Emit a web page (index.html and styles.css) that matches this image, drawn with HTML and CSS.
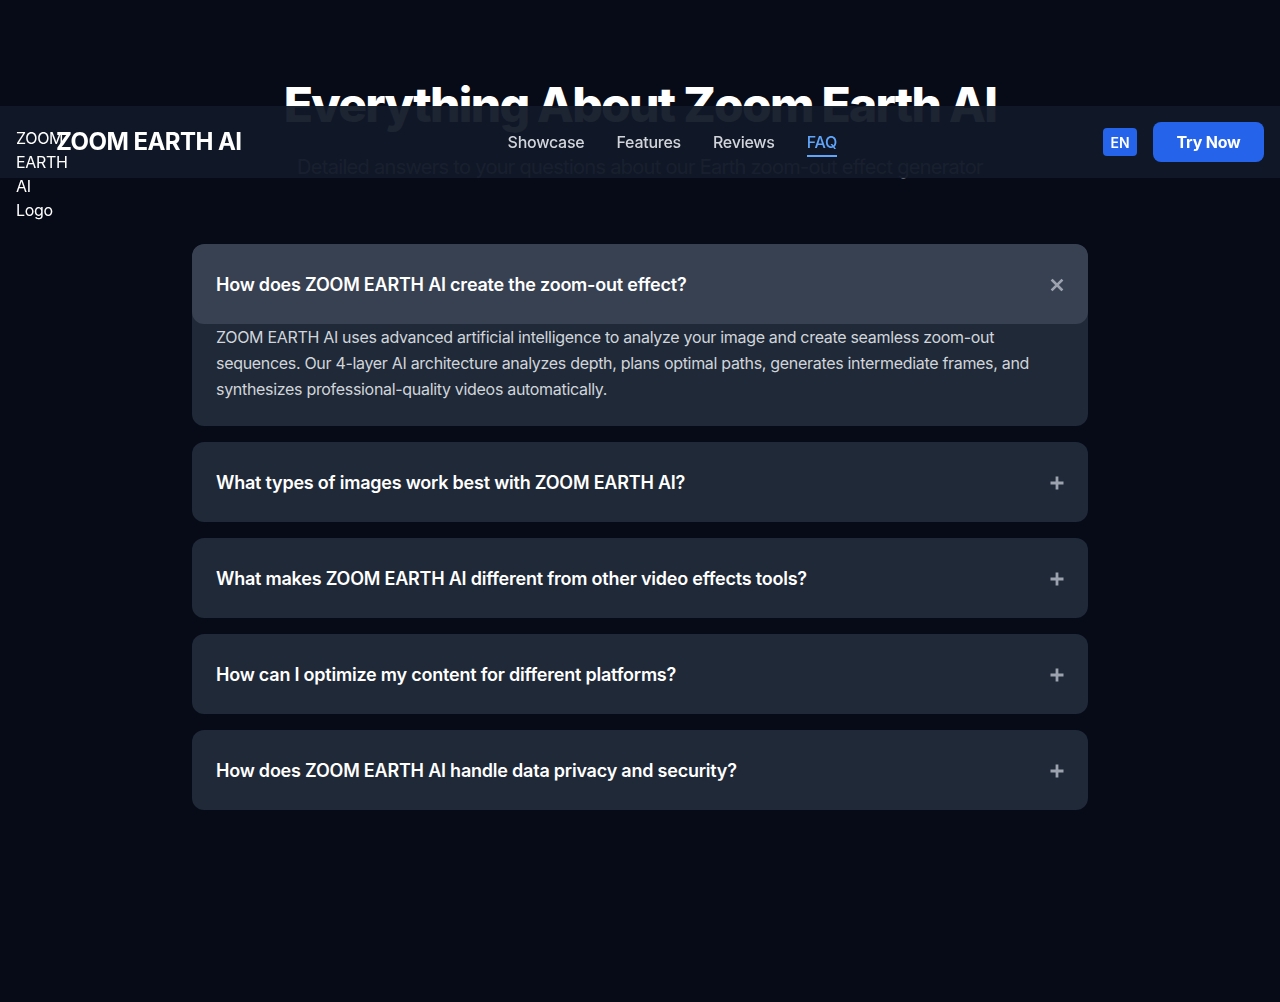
FILE: index.html
```html
<!DOCTYPE html>
<html lang="en">
<head>
<meta charset="utf-8">
<title>ZOOM EARTH AI - FAQ</title>
<link rel="stylesheet" href="styles.css">
</head>
<body>
<header class="topbar">
  <div class="brand">
    <span class="logo-alt">ZOOM EARTH AI Logo</span>
    <span class="brand-name">ZOOM EARTH AI</span>
  </div>
  <nav class="nav">
    <a href="#" class="nav-link">Showcase</a>
    <a href="#" class="nav-link">Features</a>
    <a href="#" class="nav-link">Reviews</a>
    <a href="#" class="nav-link active">FAQ</a>
  </nav>
  <div class="actions">
    <button class="lang">EN</button>
    <button class="try">Try Now</button>
  </div>
</header>

<main class="faq">
  <h2 class="faq-title">Everything About Zoom Earth AI</h2>
  <p class="faq-sub">Detailed answers to your questions about our Earth zoom-out effect generator</p>

  <div class="faq-list">
    <div class="item open">
      <div class="q">
        <span>How does ZOOM EARTH AI create the zoom-out effect?</span>
        <svg class="icon" width="14" height="14" viewBox="0 0 14 14"><path d="M2.5 2.5 L11.5 11.5 M11.5 2.5 L2.5 11.5" stroke="currentColor" stroke-width="2.6" stroke-linecap="square"/></svg>
      </div>
      <div class="a">ZOOM EARTH AI uses advanced artificial intelligence to analyze your image and create seamless zoom-out sequences. Our 4-layer AI architecture analyzes depth, plans optimal paths, generates intermediate frames, and synthesizes professional-quality videos automatically.</div>
    </div>
    <div class="item">
      <div class="q">
        <span>What types of images work best with ZOOM EARTH AI?</span>
        <svg class="icon" width="14" height="14" viewBox="0 0 14 14"><path d="M7 0.5 V13.5 M0.5 7 H13.5" stroke="currentColor" stroke-width="2.8"/></svg>
      </div>
    </div>
    <div class="item">
      <div class="q">
        <span>What makes ZOOM EARTH AI different from other video effects tools?</span>
        <svg class="icon" width="14" height="14" viewBox="0 0 14 14"><path d="M7 0.5 V13.5 M0.5 7 H13.5" stroke="currentColor" stroke-width="2.8"/></svg>
      </div>
    </div>
    <div class="item">
      <div class="q">
        <span>How can I optimize my content for different platforms?</span>
        <svg class="icon" width="14" height="14" viewBox="0 0 14 14"><path d="M7 0.5 V13.5 M0.5 7 H13.5" stroke="currentColor" stroke-width="2.8"/></svg>
      </div>
    </div>
    <div class="item">
      <div class="q">
        <span>How does ZOOM EARTH AI handle data privacy and security?</span>
        <svg class="icon" width="14" height="14" viewBox="0 0 14 14"><path d="M7 0.5 V13.5 M0.5 7 H13.5" stroke="currentColor" stroke-width="2.8"/></svg>
      </div>
    </div>
  </div>
</main>
</body>
</html>
```

FILE: styles.css
```css
* { box-sizing: border-box; }
html, body {
  margin: 0;
  padding: 0;
  background: #060b17;
  color: #fff;
  font-family: Inter, "Noto Sans", "Liberation Sans", sans-serif;
  min-height: 1002px;
}

.topbar {
  position: fixed;
  top: 106px;
  left: 0;
  right: 0;
  height: 72px;
  display: flex;
  align-items: center;
  justify-content: space-between;
  padding: 0 16px;
  background: rgba(17, 24, 39, 0.95);
  z-index: 10;
}
.brand {
  display: flex;
  align-items: center;
  gap: 8px;
}
.logo-alt {
  display: block;
  width: 32px;
  height: 32px;
  font-size: 16px;
  line-height: 24px;
  letter-spacing: -0.3px;
  color: #fff;
  overflow: visible;
}
.brand-name {
  font-size: 24px;
  font-weight: 700;
  letter-spacing: -0.55px;
  color: #fff;
  line-height: 32px;
  position: relative;
}
.nav {
  display: flex;
  gap: 32px;
  padding-top: 3px;
}
.nav-link {
  color: #d1d5db;
  text-decoration: none;
  font-size: 16px;
  font-weight: 500;
  line-height: 24px;
  letter-spacing: -0.25px;
  padding-bottom: 1px;
  border-bottom: 2px solid transparent;
}
.nav-link.active {
  color: #60a5fa;
  border-bottom-color: #60a5fa;
}
.actions {
  display: flex;
  align-items: center;
  gap: 16px;
}
.lang {
  background: #2563eb;
  color: #fff;
  border: 0;
  border-radius: 4px;
  height: 28px;
  width: 34px;
  padding: 0;
  font-family: inherit;
  font-size: 14px;
  font-weight: 600;
}
.try {
  background: #2563eb;
  color: #fff;
  border: 0;
  border-radius: 8px;
  height: 40px;
  width: 111px;
  font-family: inherit;
  font-size: 16px;
  font-weight: 700;
  letter-spacing: -0.2px;
}

.faq {
  padding: 81px 0 80px;
  display: flex;
  flex-direction: column;
  align-items: center;
}
.faq-title {
  margin: 0;
  font-size: 48px;
  line-height: 48px;
  font-weight: 800;
  letter-spacing: -1.75px;
  text-align: center;
}
.faq-sub {
  margin: 24px 0 0;
  font-size: 20px;
  line-height: 28px;
  letter-spacing: -0.7px;
  color: #9ca3af;
  text-align: center;
}
.faq-list {
  margin-top: 63px;
  width: 896px;
  display: flex;
  flex-direction: column;
  gap: 16px;
}
.item {
  background: #1f2937;
  border-radius: 12px;
  overflow: hidden;
}
.q {
  display: flex;
  align-items: center;
  justify-content: space-between;
  padding: 27px 24px 25px;
  height: 80px;
  font-size: 18px;
  line-height: 28px;
  font-weight: 600;
  letter-spacing: -0.22px;
  color: #fff;
  border-radius: 12px;
}
.item.open .q {
  background: #374151;
}
.icon {
  color: #9ca3af;
  flex: none;
}
.a {
  padding: 0 24px 24px;
  font-size: 16px;
  line-height: 26px;
  letter-spacing: -0.31px;
  color: #d1d5db;
}
```
